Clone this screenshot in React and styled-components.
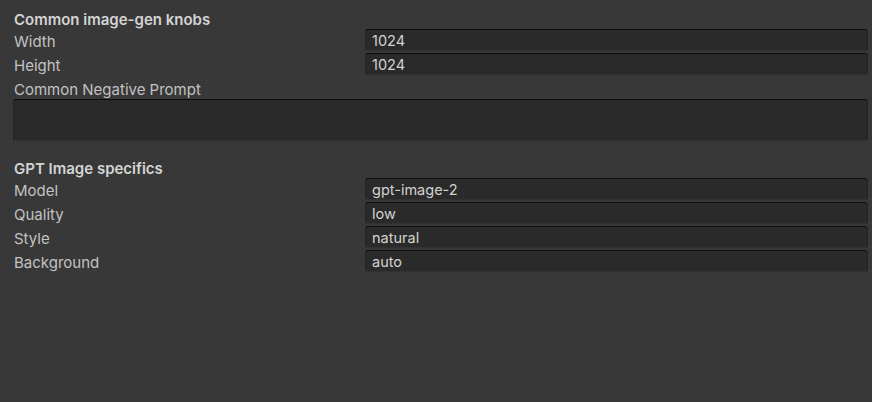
import React from 'react';
import styled, { createGlobalStyle } from 'styled-components';

const GlobalStyle = createGlobalStyle`
	html, body {
		margin: 0;
		padding: 0;
		background: #383838;
	}
	body {
		font-family: Inter, "Noto Sans", sans-serif;
	}
`;

const Inspector = styled.div`
	width: 872px;
	height: 402px;
	box-sizing: border-box;
	padding: 9px 4px 0 14px;
	background: #383838;
	display: flex;
	flex-direction: column;
`;

const Section = styled.div`
	display: flex;
	flex-direction: column;
	gap: 2px;
	margin-bottom: ${p => p.spacing || 0}px;
`;

const Header = styled.div`
	height: 18px;
	line-height: 22px;
	font-size: 15px;
	font-weight: 600;
	color: #d4d4d4;
`;

const Row = styled.div`
	display: grid;
	grid-template-columns: 351px 1fr;
	align-items: center;
	height: 22px;
`;

const Label = styled.div`
	height: 22px;
	box-sizing: border-box;
	padding-top: 2px;
	font-size: 15px;
	color: #c2c2c2;
	line-height: 21px;
	white-space: nowrap;
`;

const Field = styled.div`
	height: 22px;
	box-sizing: border-box;
	background: #2a2a2a;
	border: 1px solid #222;
	border-top-color: #0e0e0e;
	border-bottom-color: #313131;
	border-radius: 3px;
	padding: 0 6px;
	font-size: 14.5px;
	color: #d2d2d2;
	line-height: 21px;
	white-space: nowrap;
`;

const TextArea = styled(Field)`
	height: 42px;
	margin: -2px 0 0 -1px;
`;

const common = [
	{ label: 'Width', value: '1024' },
	{ label: 'Height', value: '1024' },
];

const gpt = [
	{ label: 'Model', value: 'gpt-image-2' },
	{ label: 'Quality', value: 'low' },
	{ label: 'Style', value: 'natural' },
	{ label: 'Background', value: 'auto' },
];

const FieldRow = ({ label, value }) => (
	<Row>
		<Label>{label}</Label>
		<Field>{value}</Field>
	</Row>
);

export default function App() {
	return (
		<>
			<GlobalStyle />
			<Inspector>
				<Section spacing={17}>
					<Header>Common image-gen knobs</Header>
					{common.map(r => <FieldRow key={r.label} {...r} />)}
					<Label>Common Negative Prompt</Label>
					<TextArea />
				</Section>
				<Section>
					<Header>GPT Image specifics</Header>
					{gpt.map(r => <FieldRow key={r.label} {...r} />)}
				</Section>
			</Inspector>
		</>
	);
}
